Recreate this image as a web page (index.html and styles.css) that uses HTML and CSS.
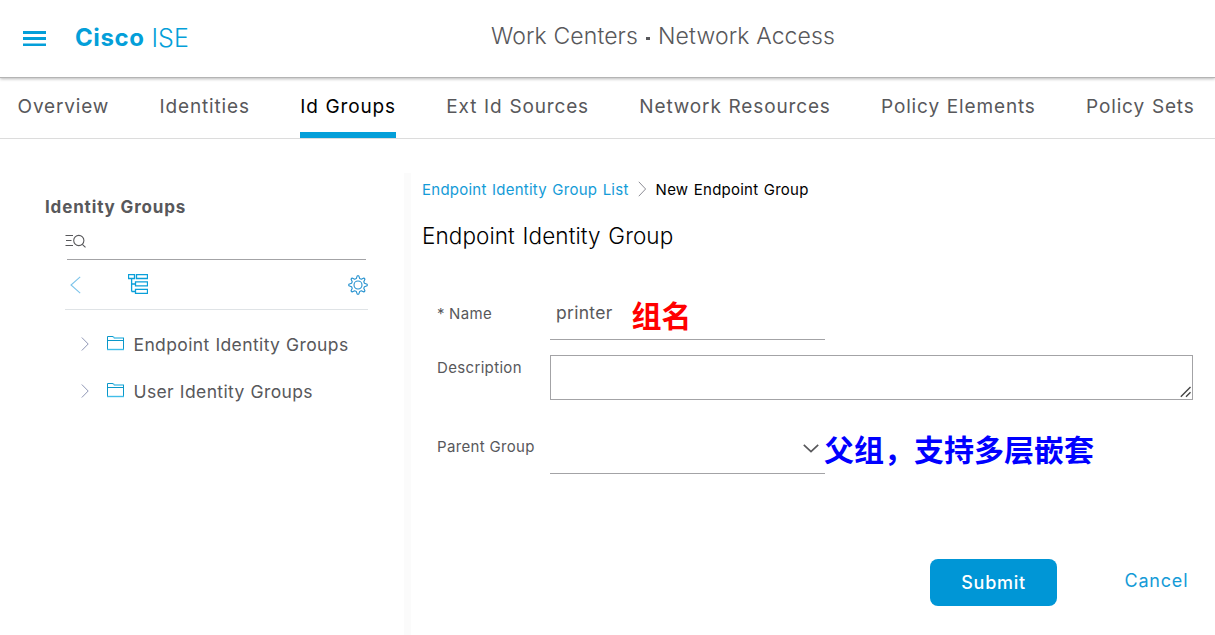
FILE: index.html
```
<!DOCTYPE html>
<html lang="en">
<head>
<meta charset="utf-8">
<title>Cisco ISE</title>
<link rel="stylesheet" href="styles.css">
</head>
<body>
<svg class="defs" width="0" height="0">
  <symbol id="folder" viewBox="0 0 18 16">
    <path d="M.5 14.5V1.5H6" fill="none" stroke="#0a97c9"/>
    <path d="M6 1.5L7.5 3H17" fill="none" stroke="#5cc3e8" stroke-width="1.6"/>
    <path d="M16.5 3V14.5M.5 5.5H16.5" fill="none" stroke="#0a97c9"/>
    <path d="M0 14.5H17" fill="none" stroke="#41bde8" stroke-width="1.4"/>
  </symbol>
  <symbol id="chevron" viewBox="0 0 8 14">
    <path d="M.8.5L7.2 7L.8 13.5" fill="none" stroke="#8f96b5"/>
  </symbol>
</svg>
<header class="header">
  <svg class="burger" width="23" height="15" viewBox="0 0 23 15"><path d="M0 1.5H23M0 7.5H23M0 14H23" stroke="#049fd9" stroke-width="2.8" /></svg>
  <div class="brand"><b class="brand-name">Cisco</b><span class="brand-product">ISE</span></div>
  <div class="title"><span>Work Centers</span><i class="dot"></i><span>Network Access</span></div>
</header>
<nav class="nav">
  <a>Overview</a>
  <a>Identities</a>
  <a class="active">Id Groups</a>
  <a>Ext Id Sources</a>
  <a>Network Resources</a>
  <a>Policy Elements</a>
  <a>Policy Sets</a>
</nav>
<div class="body">
  <aside class="side">
    <h2 class="side-title">Identity Groups</h2>
    <div class="search">
      <svg width="22" height="14" viewBox="0 0 22 14" fill="none" stroke="#58585b" stroke-width="1.1"><path d="M.5 1.5H8M1 6.5H6.5M.5 11.5H8M17.3 10.3L20.5 13.3"/><circle cx="13.8" cy="6.5" r="5.1"/></svg>
    </div>
    <div class="tools">
      <svg class="back" width="11" height="18" viewBox="0 0 11 18"><path d="M10.2.8L1 9L10.2 17.2" fill="none" stroke="#7cc4ea" stroke-width="1.1"/></svg>
      <svg class="tree-icon" width="20" height="20" viewBox="0 0 20 20" fill="none" stroke="#0a9fd9" stroke-width="1.3"><path d="M.5.5H6.5V4.5H.5ZM8.5.5H19.5V4.5H8.5ZM7.5 7.8H19.5V11.8H7.5ZM7.5 15.3H19.5V19.3H7.5ZM3.6 4.5V17.5M3.6 10H7.5M3.6 17.5H7.5"/></svg>
      <svg class="gear" width="20" height="20" viewBox="0 0 20 20" fill="none" stroke="#2491cf" stroke-width="1.1" stroke-linejoin="round"><circle cx="10" cy="10" r="4"/><path d="M8.3 3.6L9.2.8H10.8L11.7 3.6L13.3 4.2L15.9 3L17 4.1L15.8 6.7L16.4 8.3L19.2 9.2V10.8L16.4 11.7L15.8 13.3L17 15.9L15.9 17L13.3 15.8L11.7 16.4L10.8 19.2H9.2L8.3 16.4L6.7 15.8L4.1 17L3 15.9L4.2 13.3L3.6 11.7L.8 10.8V9.2L3.6 8.3L4.2 6.7L3 4.1L4.1 3L6.7 4.2Z"/></svg>
    </div>
    <ul class="tree">
      <li><svg class="expand" width="8" height="14"><use href="#chevron"/></svg><svg class="folder" width="18" height="16"><use href="#folder"/></svg><span>Endpoint Identity Groups</span></li>
      <li><svg class="expand" width="8" height="14"><use href="#chevron"/></svg><svg class="folder" width="18" height="16"><use href="#folder"/></svg><span>User Identity Groups</span></li>
    </ul>
  </aside>
  <div class="divider"></div>
  <main class="main">
    <div class="crumbs">
      <a class="crumb-link">Endpoint Identity Group List</a>
      <svg width="9" height="16" viewBox="0 0 9 16"><path d="M.8.8L7.6 8L.8 15.2" fill="none" stroke="#8c8c94"/></svg>
      <span>New Endpoint Group</span>
    </div>
    <h1 class="page-title">Endpoint Identity Group</h1>
    <div class="row row-name">
      <label class="label"><span class="star">*</span>Name</label>
      <div class="field name-field"><span>printer</span><b class="note note-red">组名</b></div>
    </div>
    <div class="row row-desc">
      <label class="label">Description</label>
      <div class="area"><svg width="12" height="12" viewBox="0 0 12 12"><path d="M.8 10.7L10.5 1M6 10.7L10.5 6.2" stroke="#444" stroke-width="1.4" fill="none"/></svg></div>
    </div>
    <div class="row row-parent">
      <label class="label">Parent Group</label>
      <div class="field select"><svg width="16" height="9" viewBox="0 0 16 9"><path d="M.8.9L8 7.6L15.2.9" fill="none" stroke="#58585b" stroke-width="1.7"/></svg></div>
      <b class="note note-blue">父组，支持多层嵌套</b>
    </div>
    <div class="actions">
      <button class="submit">Submit</button>
      <a class="cancel">Cancel</a>
    </div>
  </main>
</div>
</body>
</html>
```
FILE: styles.css
```
* { box-sizing: border-box; }
body {
  margin: 0;
  height: 635px;
  overflow: hidden;
  background: #fff;
  color: #58585b;
  font-family: Inter, "Noto Sans CJK SC", sans-serif;
}
svg { display: block; flex: none; }
.defs { position: absolute; }

.header {
  position: relative;
  height: 78px;
  display: flex;
  align-items: flex-start;
  padding-left: 23px;
  border-bottom: 1px solid #b4b4b4;
  box-shadow: 0 1px 3px rgba(0, 0, 0, .28);
  white-space: nowrap;
}
.burger { margin-top: 31px; }
.brand {
  display: flex;
  align-items: center;
  gap: 7px;
  width: 415px;
  height: 75px;
  padding-left: 29px;
  color: #049fd9;
}
.brand-name { font-size: 24px; font-weight: 700; letter-spacing: .6px; }
.brand-product { font-size: 25px; font-weight: 300; letter-spacing: 0; }
.title {
  display: flex;
  align-items: center;
  height: 72px;
  padding-left: 30px;
  font-size: 23px;
  font-weight: 340;
  letter-spacing: .12px;
}
.dot { width: 4px; height: 3px; margin: 5px 8px 0 8px; background: #58585b; }

.nav {
  display: flex;
  gap: 50.35px;
  height: 61px;
  padding-left: 17.5px;
  border-bottom: 1px solid #dcdcdc;
  font-size: 19px;
  line-height: 57px;
  letter-spacing: .85px;
  word-spacing: .7px;
  white-space: nowrap;
}
.nav .active { color: #000; border-bottom: 6px solid #049fd9; }

.body { display: flex; height: 496px; }
.side { width: 404px; padding: 56px 0 0 45px; }
.side-title {
  margin: 0;
  font-size: 17px;
  line-height: 24px;
  font-weight: 700;
  letter-spacing: .85px;
}
.search {
  width: 299px;
  height: 41px;
  margin-left: 22px;
  padding-top: 15px;
  border-bottom: 1px solid #a3a3a6;
}
.search svg { margin-left: -2px; }
.tools {
  display: flex;
  width: 303px;
  height: 50px;
  margin-left: 20px;
  padding: 14px 0 0 5px;
  border-bottom: 1px solid #dfe3e6;
}
.back { margin-top: 2px; }
.tree-icon { margin-left: 47px; }
.gear { margin: 1px 0 0 auto; }
.tree { list-style: none; margin: 11px 0 0; padding: 0 0 0 35.5px; }
.tree li {
  display: flex;
  align-items: center;
  height: 47px;
  font-size: 17.5px;
  letter-spacing: .38px;
  word-spacing: .5px;
}
.expand { margin-top: -2px; }
.folder { margin: -4px 8.5px 0 18.5px; }

.divider {
  width: 7px;
  margin-top: 34px;
  background: #fbfbfb;
}

.main { flex: 1; padding: 38px 22px 0 11px; }
.crumbs {
  display: flex;
  align-items: center;
  height: 24px;
  font-size: 15px;
  letter-spacing: .25px;
  word-spacing: .9px;
  color: #000;
}
.crumbs svg { margin: 0 9px 0 9px; }
.crumb-link { color: #149bd7; }
.page-title {
  margin: 20px 0 0;
  font-size: 22.5px;
  line-height: 30px;
  font-weight: 360;
  letter-spacing: .08px;
  word-spacing: 1.3px;
  color: #000;
}
.row { display: flex; padding-left: 15px; }
.label { width: 113px; font-size: 15px; line-height: 24px; letter-spacing: .34px; }
.star { display: inline-block; width: 12px; }
.field { width: 275px; border-bottom: 1px solid #a3a3a6; }
.row-name { height: 54px; margin-top: 35px; align-items: flex-start; }
.row-name .label { margin-top: 16px; }
.name-field {
  display: flex;
  gap: 19px;
  height: 53px;
  padding-left: 6px;
  font-size: 17.5px;
  line-height: 52px;
  margin-top: 1px;
  letter-spacing: .3px;
}
.note {
  font: 700 30px/40px "Noto Sans CJK SC", sans-serif;
  letter-spacing: 0;
  white-space: nowrap;
}
.note-red { color: #f00; margin-top: 7px; }
.note-blue { color: #00f; margin: -7px 0 0 -1px; }
.row-desc { margin-top: 15px; }
.row-desc .label { padding-top: 1px; }
.area {
  display: flex;
  align-items: flex-end;
  justify-content: flex-end;
  width: 643px;
  height: 45px;
  padding-bottom: 1px;
  border: 1px solid #a3a3a6;
}
.row-parent { margin-top: 35px; }
.select { display: flex; justify-content: flex-end; height: 39px; padding: 9px 6px 0 0; }
.actions { display: flex; margin: 85px 0 0 508px; }
.submit {
  width: 127px;
  height: 47px;
  padding: 0;
  border: 0;
  border-radius: 8px;
  background: #0096d6;
  color: #fff;
  font: 500 18px/46px Inter, sans-serif;
  letter-spacing: .7px;
}
.cancel {
  margin-left: 67.5px;
  font-size: 18px;
  line-height: 44px;
  letter-spacing: .8px;
  color: #149bd7;
}
```
